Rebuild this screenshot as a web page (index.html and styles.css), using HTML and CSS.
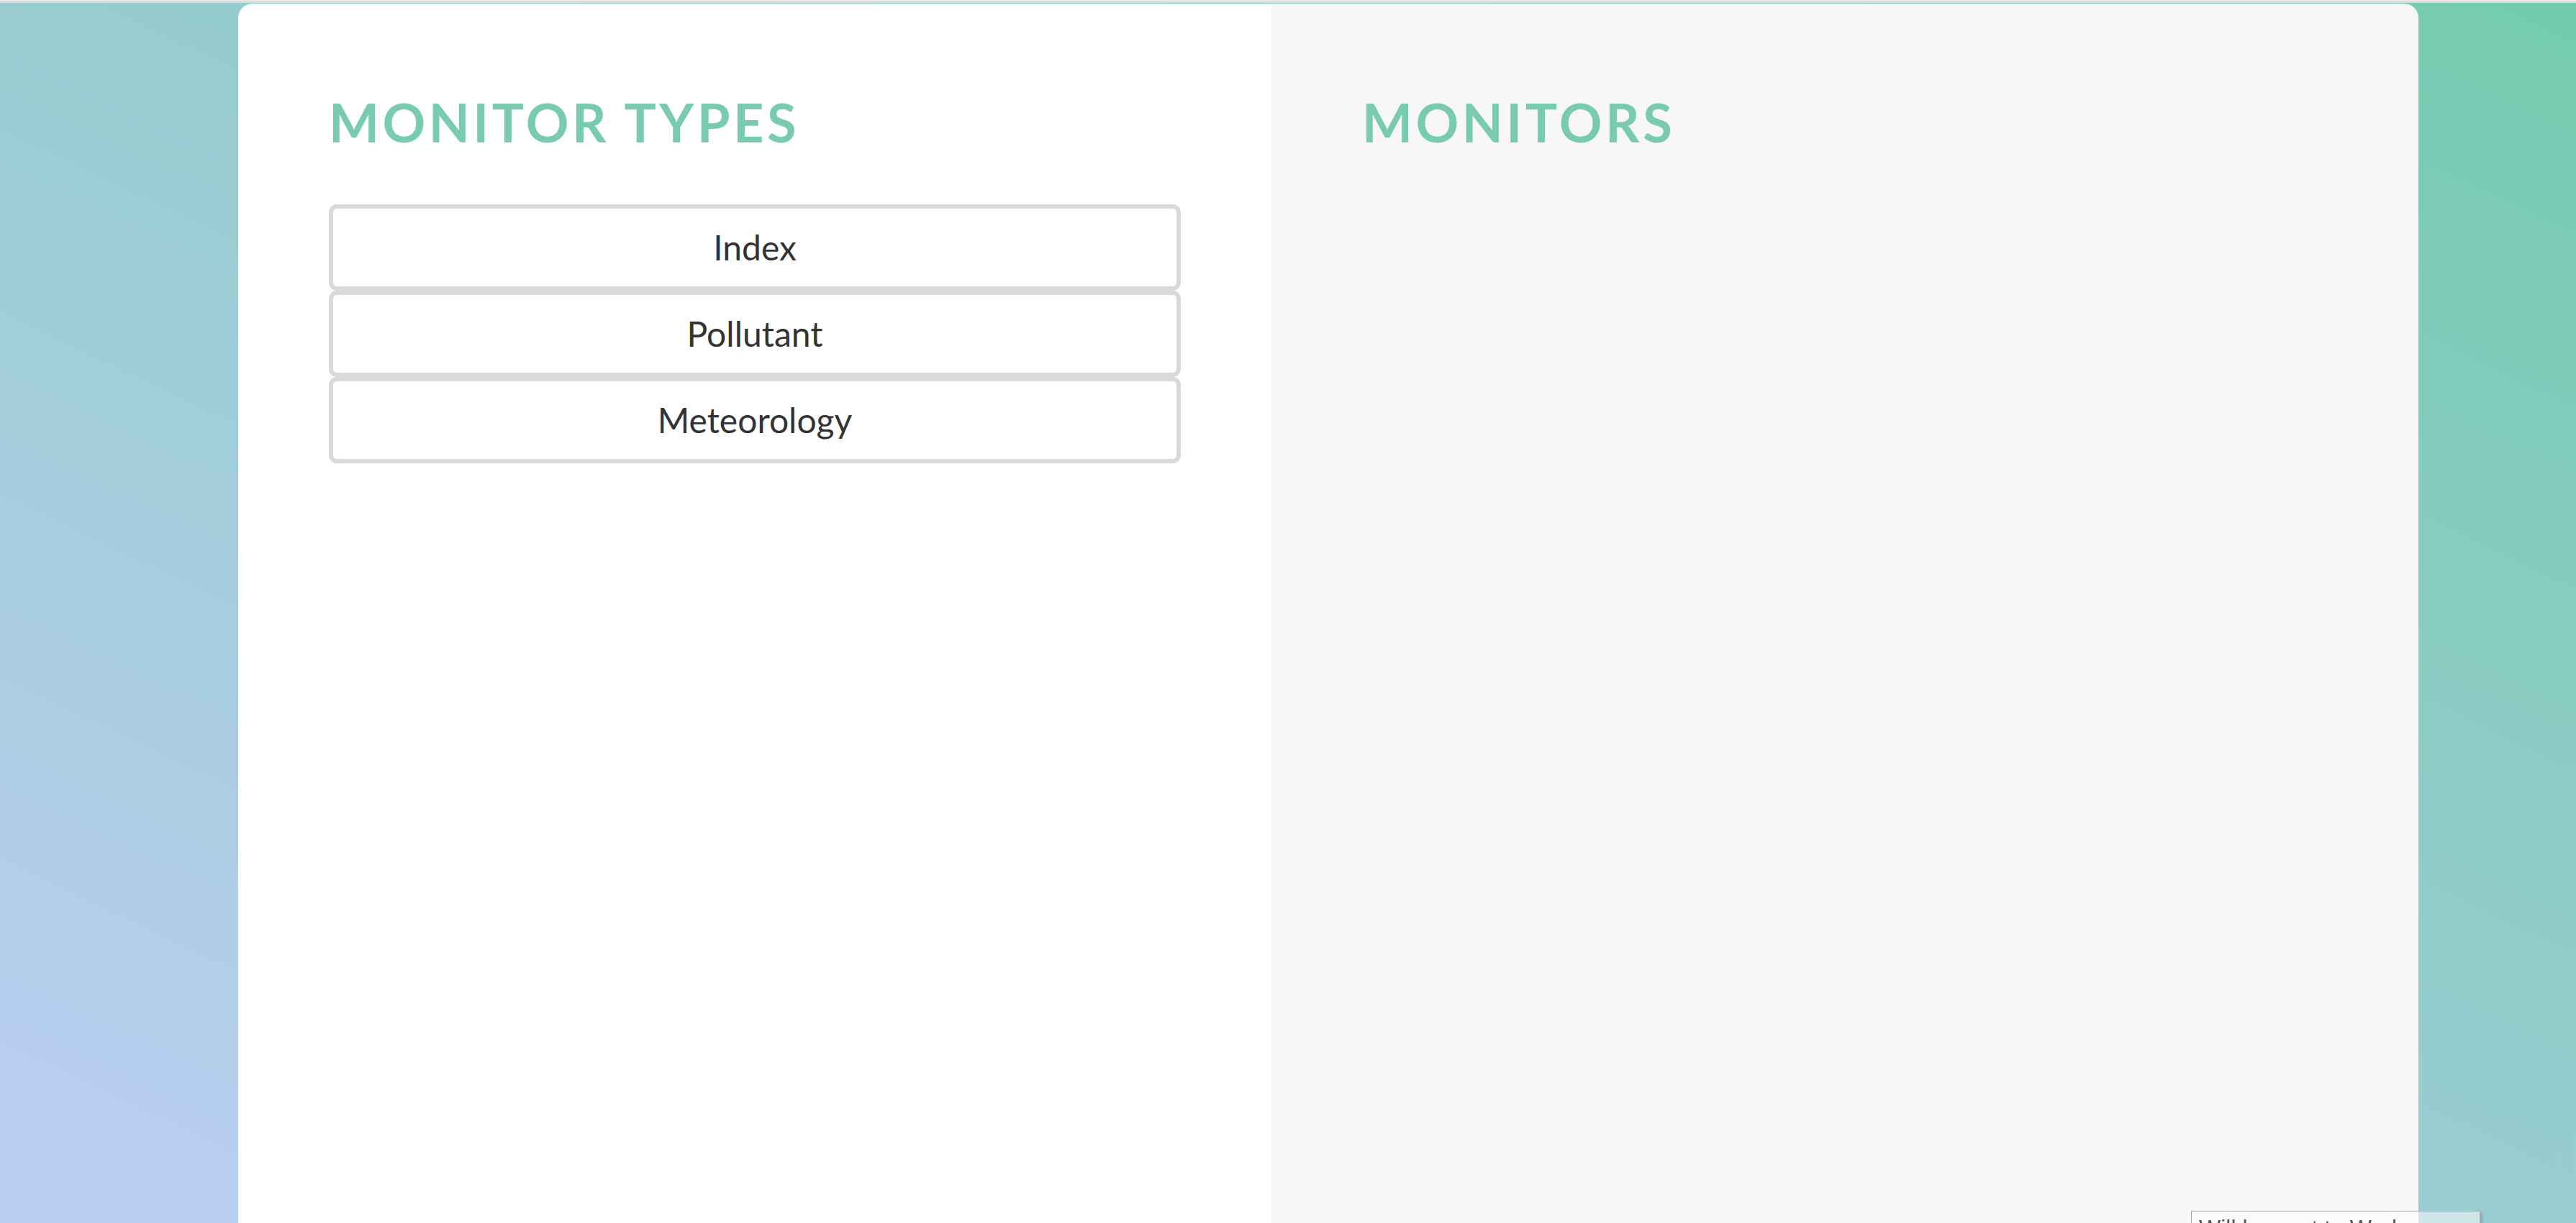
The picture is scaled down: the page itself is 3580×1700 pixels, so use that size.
FILE: index.html
```html
<!DOCTYPE html>
<html lang="en">
<head>
<meta charset="utf-8">
<title>Monitors</title>
<link rel="stylesheet" href="styles.css">
</head>
<body>
<div class="topbar"></div>
<main class="card">
  <section class="panel panel-types">
    <h2 class="title">MONITOR TYPES</h2>
    <ul class="type-list">
      <li><button class="type-btn" type="button">Index</button></li>
      <li><button class="type-btn" type="button">Pollutant</button></li>
      <li><button class="type-btn" type="button">Meteorology</button></li>
    </ul>
  </section>
  <section class="panel panel-monitors">
    <h2 class="title">MONITORS</h2>
  </section>
</main>
<div class="toast">Will be sent to Work</div>
</body>
</html>
```
FILE: styles.css
```css
html, body {
  margin: 0;
  padding: 0;
  height: 100%;
  overflow: hidden;
}

body {
  background: linear-gradient(to top right, #bccef3 0%, #74cbae 100%);
  font-family: "Lato", "Liberation Sans", sans-serif;
}

.topbar {
  height: 3px;
  border-top: 1px solid #eeeeee;
  background: #dcdcdc;
}

.card {
  display: flex;
  width: 3030px;
  height: 1720px;
  margin: 1px 0 0 331px;
  border-radius: 20px 20px 0 0;
  overflow: hidden;
}

.panel {
  box-sizing: border-box;
  padding: 121px 126px 0 126px;
}

.panel-types {
  width: 1436px;
  flex: none;
  background: #ffffff;
}

.panel-monitors {
  flex: 1;
  background: #f7f7f7;
}

.title {
  margin: 0;
  font-family: "Lato", sans-serif;
  font-weight: 700;
  font-size: 74px;
  line-height: 1.2;
  letter-spacing: 4.5px;
  color: #78cbb0;
}

.type-list {
  list-style: none;
  margin: 69px 0 0 0;
  padding: 0;
  display: flex;
  flex-direction: column;
}

.type-btn {
  display: block;
  box-sizing: border-box;
  width: 100%;
  height: 120px;
  margin: 0;
  padding: 0;
  background: #ffffff;
  border: 6px solid #d9d9d9;
  border-radius: 11px;
  font-family: "Lato", sans-serif;
  font-size: 48px;
  font-weight: 400;
  color: #333333;
  text-align: center;
  cursor: pointer;
}

.toast {
  position: fixed;
  left: 3045px;
  top: 1683px;
  width: 380px;
  height: 60px;
  padding: 5px 10px;
  border: 1px solid #a9a9a9;
  background: rgba(255, 255, 255, 0.5);
  box-shadow: 3px 3px 3px rgba(0, 0, 0, 0.15);
  font-family: "Liberation Sans", sans-serif;
  font-size: 32px;
  color: #555555;
  white-space: nowrap;
}
```
